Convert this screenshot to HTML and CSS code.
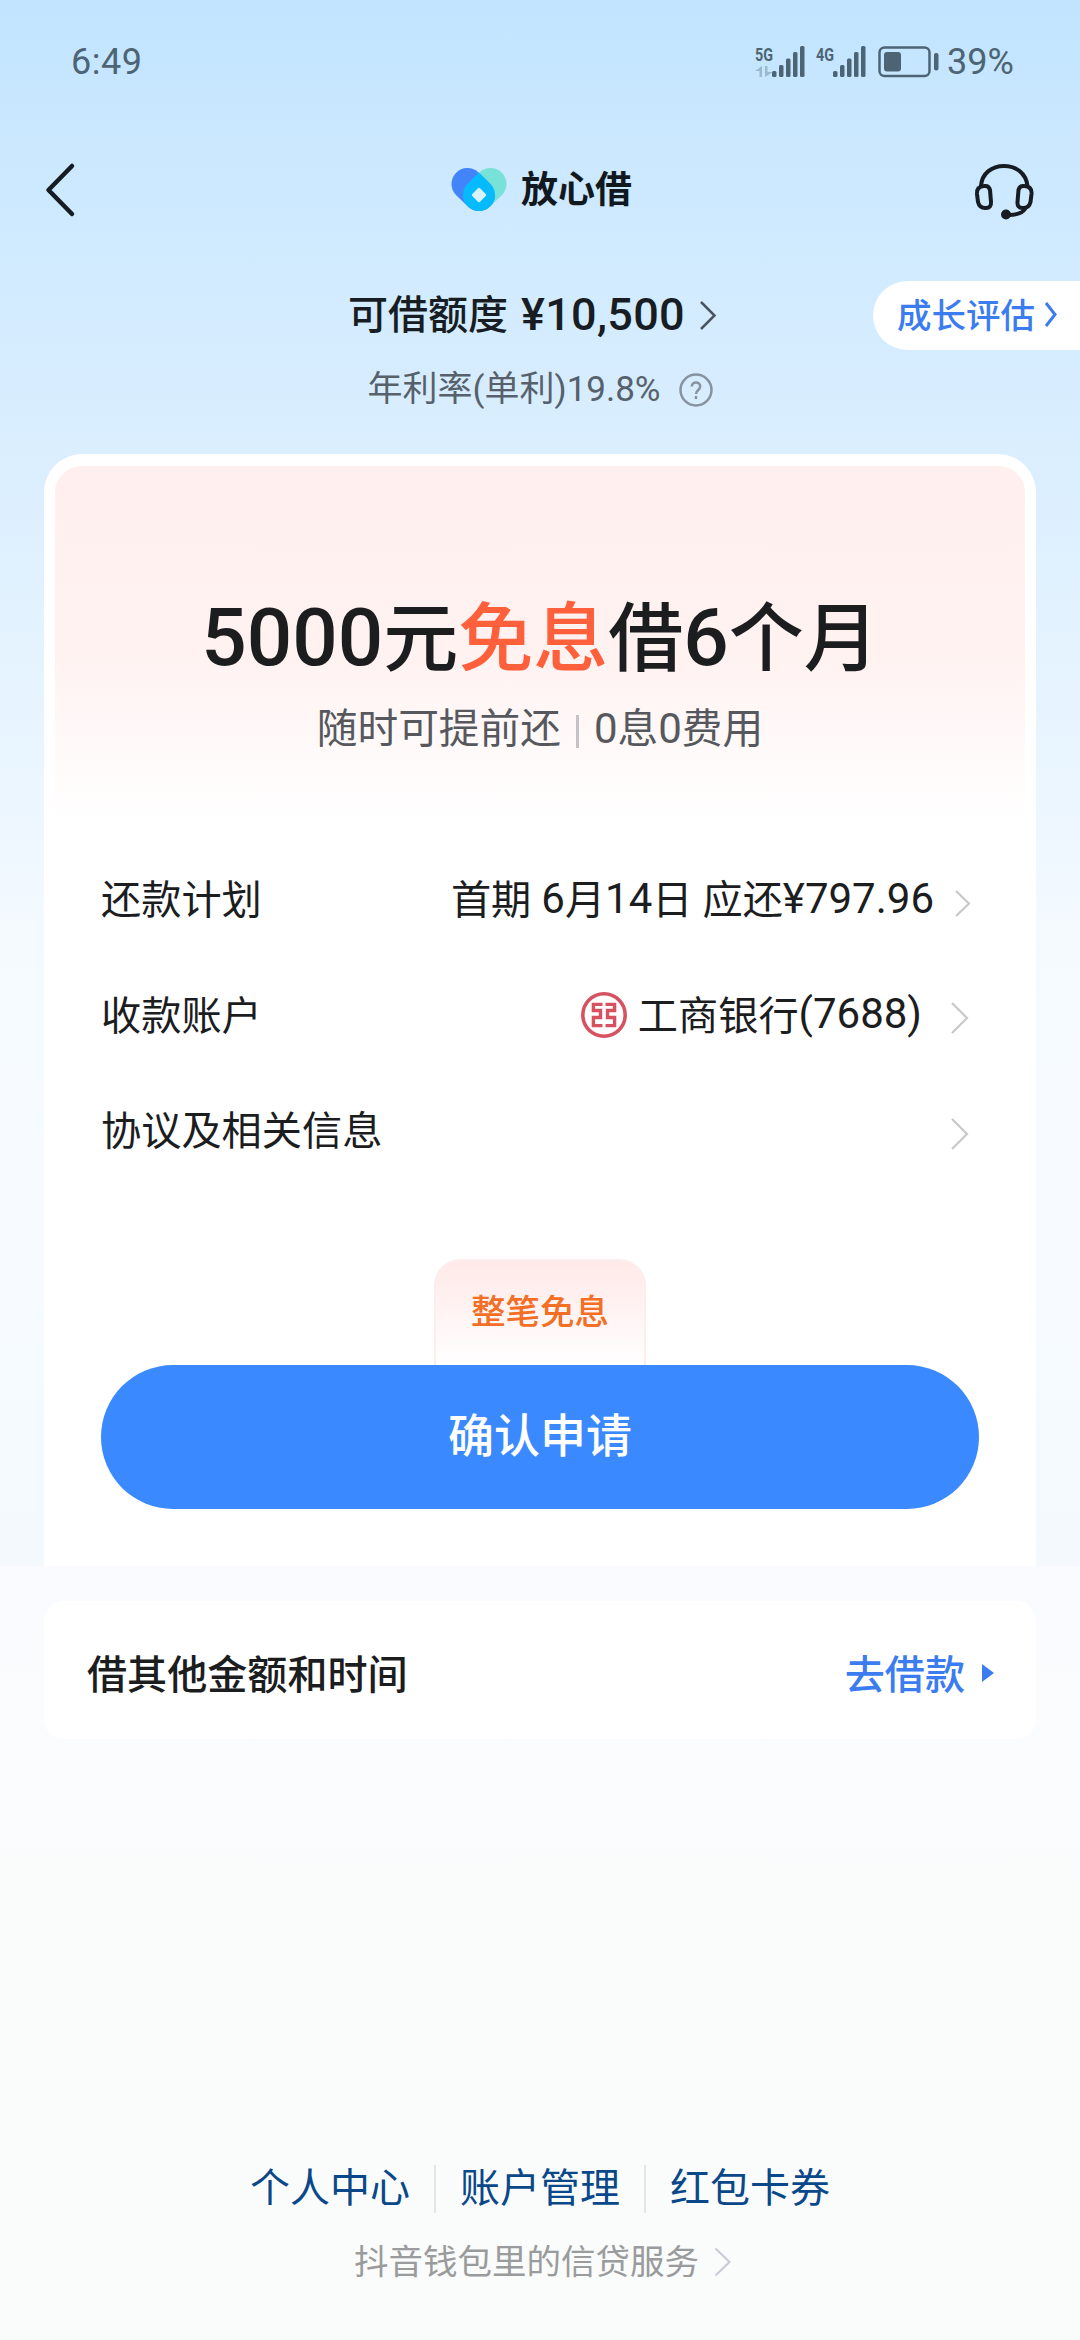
FILE: index.html
```html
<!DOCTYPE html>
<html lang="zh-CN">
<head>
<meta charset="utf-8">
<title>放心借</title>
<link rel="stylesheet" href="styles.css">
</head>
<body>
<div class="screen">
  <div class="hero">
    <div class="status">
      <span class="clock">6:49</span>
      <svg class="status-icons" width="188" height="36" viewBox="0 0 188 36" fill="#4c6474">
        <text x="1" y="17" class="net" textLength="18" lengthAdjust="spacingAndGlyphs">5G</text>
        <g opacity=".35"><path d="M8 22v11H5.500v-6H1zM11 33V22h2.500v6H19z"/></g>
        <rect x="18" y="27" width="4.500" height="6" rx="1.500"/><rect x="25" y="21" width="4.500" height="12" rx="1.500"/><rect x="32" y="14.500" width="4.500" height="18.500" rx="1.500"/><rect x="39" y="8" width="4.500" height="25" rx="1.500"/><rect x="46" y="2" width="4.500" height="31" rx="1.500"/>
        <text x="62" y="17" class="net" textLength="18" lengthAdjust="spacingAndGlyphs">4G</text>
        <rect x="79" y="27" width="4.500" height="6" rx="1.500"/><rect x="86" y="21" width="4.500" height="12" rx="1.500"/><rect x="93" y="14.500" width="4.500" height="18.500" rx="1.500"/><rect x="100" y="8" width="4.500" height="25" rx="1.500"/><rect x="107" y="2" width="4.500" height="31" rx="1.500"/>
        <rect x="125.500" y="3.500" width="50" height="28.500" rx="5" fill="none" stroke="#4c6474" stroke-width="2.500"/>
        <rect x="130" y="8" width="17" height="19.500" rx="3"/>
        <rect x="180" y="9" width="4.500" height="17.500" rx="2"/>
      </svg>
      <span class="battery">39%</span>
    </div>

    <div class="nav">
      <svg width="32" height="56" viewBox="0 0 32 56" fill="none" stroke="#161c21" stroke-width="4.500" stroke-linecap="round" stroke-linejoin="round"><path d="M28 4L4.500 28 28 52"/></svg>
      <div class="brand">
        <svg width="56" height="44" viewBox="0 0 56 44">
          <path d="M39.500 16L28 27" stroke="#78e2d9" stroke-width="32" stroke-linecap="round"/>
          <path d="M16.500 16L28 27" stroke="#4285fb" stroke-width="32" stroke-linecap="round"/>
          <path d="M28 4.400L51 27H28z" fill="#78e2d9"/>
          <path d="M28 4.400L39.300 15.700A16 16 0 1 1 16.700 15.700z" fill="#06bbfd"/>
          <rect x="22.500" y="21.500" width="11" height="11" rx="1.500" fill="#d8f3ff" transform="rotate(45 28 27)"/>
        </svg>
        <span class="brand-name">放心借</span>
      </div>
      <svg class="headset" width="60" height="58" viewBox="0 0 60 58" fill="none" stroke="#161c21" stroke-width="4" stroke-linecap="round" stroke-linejoin="round">
        <path d="M7 23C8 10 18 3 30 3s22 7 23.500 20"/>
        <path d="M10 23c4-.5 5.500 1.500 6 4l1 12c.3 4-1.500 6-5 6-5 .3-7-2-8-6l-1-8c-.5-5 2-7.500 7-8z"/>
        <path d="M50.500 23c-4-.5-5.500 1.500-6 4l-1 12c-.3 4 1.500 6 5 6 5 .3 7-2 8-6l1-8c.5-5-2-7.500-7-8z"/>
        <path d="M51 46c-3 4.500-9 6-17 6"/><circle cx="32" cy="51.500" r="3" fill="#161c21"/>
      </svg>
    </div>

    <div class="quota">
      <span class="quota-label">可借额度</span><span class="quota-sum">¥10,500</span>
      <svg width="20" height="32" viewBox="0 0 20 32" fill="none" stroke="#4a545d" stroke-width="2.500"><path d="M3 3l13.500 13.500L3 30"/></svg>
      <a class="growth"><span>成长评估</span><svg width="14" height="28" viewBox="0 0 14 28" fill="none" stroke="#3b7df0" stroke-width="3"><path d="M2 2l9 11.500L2 25"/></svg></a>
    </div>
    <div class="rate">
      <span>年利率(单利)19.8%</span>
      <svg width="34" height="34" viewBox="0 0 34 34" fill="none" stroke="#88939f" stroke-width="2.500"><circle cx="17" cy="17" r="15.500"/><path d="M12.800 13.500c0-5.500 8.400-5.500 8.400 0 0 3.500-4.200 3.500-4.200 7.500M17 23v3"/></svg>
    </div>

    <div class="card">
      <div class="promo">
        <div class="headline"><span class="big-num">5000</span>元<em>免息</em>借<span class="big-num">6</span>个月</div>
        <div class="sub"><span>随时可提前还</span><i></i><span><b>0</b>息<b>0</b>费用</span></div>
      </div>
      <div class="rows">
        <div class="row first">
          <span>还款计划</span>
          <span class="value">首期 <b>6</b>月<b>14</b>日 应还<b>¥797.96</b></span>
          <svg width="18" height="32" viewBox="0 0 18 32" fill="none" stroke="#c6c8cb" stroke-width="2.200"><path d="M2 4l13 12.500L2 29"/></svg>
        </div>
        <div class="row">
          <span>收款账户</span>
          <span class="value"><svg class="bank" width="46" height="46" viewBox="0 0 46 46" fill="none" stroke="#d65261">
            <circle cx="23" cy="23" r="21.200" stroke-width="3.600"/>
            <path stroke-width="3.400" d="M21.500 12.400H12.400V18.500H19.500V25.500H12.400V33.600H21.500M24.500 12.400H33.600V18.500H26.500V25.500H33.600V33.600H24.500"/>
          </svg>工商银行<b>(7688)</b></span>
          <svg width="22" height="34" viewBox="0 0 22 34" fill="none" stroke="#c6c8cb" stroke-width="2.200"><path d="M2 2l15 15L2 32"/></svg>
        </div>
        <div class="row">
          <span>协议及相关信息</span>
          <svg width="22" height="34" viewBox="0 0 22 34" fill="none" stroke="#c6c8cb" stroke-width="2.200"><path d="M2 2l15 15L2 32"/></svg>
        </div>
      </div>
      <div class="tag">整笔免息</div>
      <button class="apply">确认申请</button>
    </div>
  </div>

  <div class="other">
    <span>借其他金额和时间</span>
    <a class="go">去借款<svg width="14" height="22" viewBox="0 0 14 22" fill="#3b7df0"><path d="M1 4l12 9-12 9z"/></svg></a>
  </div>

  <div class="footer">
    <div class="links"><a>个人中心</a><a>账户管理</a><a>红包卡券</a></div>
    <div class="service"><span>抖音钱包里的信贷服务</span><svg width="18" height="32" viewBox="0 0 18 32" fill="none" stroke="#c9ccd6" stroke-width="2.200"><path d="M1.500 2.500L15.500 16l-14 13.500"/></svg></div>
  </div>
</div>
</body>
</html>
```
FILE: styles.css
```css
* { box-sizing: border-box; }
body { margin: 0; font-family: "Roboto", "Noto Sans CJK SC", sans-serif; color: #1c1d1f; }
svg { display: block; flex: none; }
b, em, i { font-weight: inherit; font-style: normal; }
.screen {
  width: 1080px; height: 2340px; overflow: hidden;
  display: flex; flex-direction: column;
  background: linear-gradient(#fafbfe 1566px, #fafcfc 1900px, #fafcfb);
}
.hero {
  height: 1566px; flex: none; padding: 0 44px;
  display: flex; flex-direction: column;
  background: linear-gradient(#c1e4ff 0, #c8e7ff 100px, #d2ebff 280px, #daeefe 450px, #e9f5ff 750px, #f5faff 950px, #f7fbff 1250px, #f3f9fd 1566px);
}
.status { height: 123px; padding: 0 19px 0 27px; display: flex; align-items: center; color: #4c6474; }
.clock { font-size: 36px; letter-spacing: .5px; flex: 1; }
.status-icons { margin-right: 5px; }
.net { font: 700 19px "Roboto", sans-serif; }
.battery { font-size: 36px; width: 70px; white-space: nowrap; }

.nav { height: 133px; padding: 0 2px 0 0; display: flex; align-items: center; justify-content: space-between; }
.brand { display: flex; align-items: center; gap: 14px; margin-left: 33px; }
.brand-name { font-size: 37px; line-height: 44px; padding-top: 2px; font-weight: 700; color: #11191f; }
.headset { margin-top: 4px; }

.quota { height: 118px; margin-right: -44px; padding-left: 304px; display: flex; align-items: center; font-size: 40px; font-weight: 500; color: #171d22; }
.quota-label { padding-bottom: 6px; }
.quota-sum { font-size: 45px; line-height: 50px; letter-spacing: .3px; margin: 0 13px 0 13px; }
.growth {
  margin-left: auto; width: 207px; height: 69px; padding-left: 24px;
  display: flex; align-items: center; gap: 9px;
  background: #fff; border-radius: 35px 0 0 35px;
  font-size: 34.500px; color: #3b7df0;
}
.growth span { padding-bottom: 5px; }
.rate { height: 32px; display: flex; align-items: center; justify-content: center; gap: 18px; font-size: 35px; line-height: 32px; color: #56616c; }

.card { margin-top: 48px; height: 1112px; background: #fff; border-radius: 38px 38px 0 0; padding: 12px 11px 0; display: flex; flex-direction: column; }
.promo { height: 368px; border-radius: 26px 26px 0 0; background: linear-gradient(#fff0ef, #fff2f1 50%, #fff 98%); display: flex; flex-direction: column; align-items: center; }
.headline { margin-top: 120px; height: 104px; line-height: 104px; font-size: 75px; font-weight: 500; white-space: nowrap; }
.headline em { color: #ff603c; }
.big-num { font-size: 80px; }
.sub { margin-top: 12px; height: 54px; line-height: 54px; font-size: 40.700px; color: #56585e; display: flex; align-items: center; }
.sub b { font-size: 42px; }
.sub i { width: 3px; height: 33px; background: #c4c2c4; margin: 4px 15px 0; }

.rows { padding: 8px 45px 0 46px; font-size: 40.200px; }
.row { height: 115.500px; display: flex; align-items: center; justify-content: space-between; }
.row > span { padding-bottom: 6px; }
.row > svg { margin-left: 28px; margin-right: 8px; position: relative; top: 3px; }
.row.first > svg { margin-left: 20px; }
.value { margin-left: auto; display: flex; align-items: center; white-space: pre; }
.value b { font-size: 42px; padding-top: 3px; }
.bank { margin: 6px 11px 0 0; }

.tag {
  margin: 70px auto 0; width: 212px; height: 106px; line-height: 102px; text-align: center;
  font-size: 34.500px; font-weight: 500; color: #f26f25;
  border: 2px solid #fdeeee; border-bottom: 0; border-radius: 26px 26px 0 0;
  background: linear-gradient(#ffe9e8, #fff);
}
.apply {
  margin: 0 46px; height: 144px; padding: 0 0 10px; border: 0; border-radius: 72px; background: #3a89ff;
  font: 500 46px/134px "Noto Sans CJK SC", sans-serif; color: #fff;
}
.other {
  margin: 35px 44px 0; height: 138px; padding: 2px 41px 0 43px; flex: none;
  display: flex; align-items: center; justify-content: space-between;
  background: #fff; border-radius: 20px; font-size: 40.100px; font-weight: 500;
}
.go { display: flex; align-items: center; gap: 16px; color: #3b7df0; }
.footer { margin-top: auto; height: 175px; display: flex; flex-direction: column; align-items: center; }
.links { display: flex; font-size: 40px; line-height: 48px; color: #0b488a; }
.links a { padding: 0 24px; }
.links a + a { border-left: 2px solid #e3e5e7; }
.service { margin: 24px 0 0 6px; height: 50px; display: flex; align-items: center; gap: 15px; font-size: 34.500px; line-height: 50px; color: #9a9b9c; }
```
